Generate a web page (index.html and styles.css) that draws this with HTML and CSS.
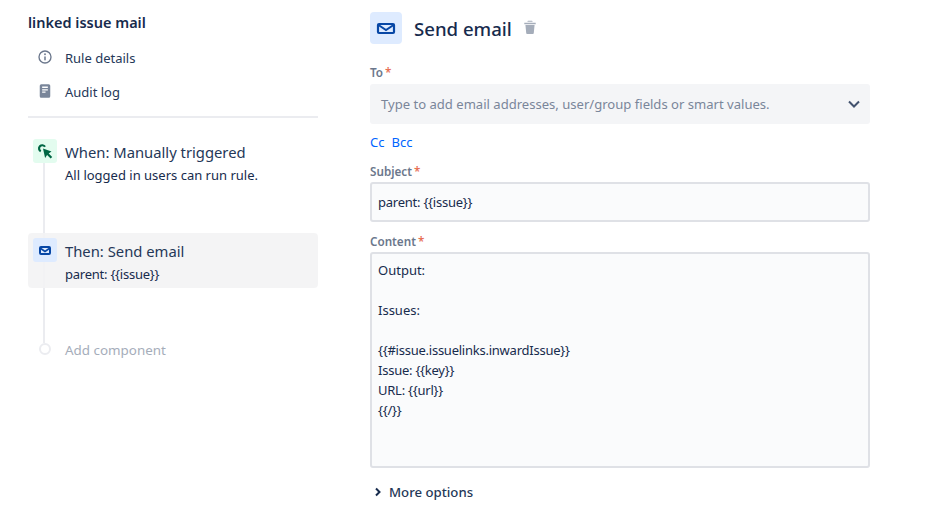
FILE: index.html
```html
<!DOCTYPE html>
<html lang="en">
<head>
<meta charset="utf-8">
<title>Send email</title>
<link rel="stylesheet" href="styles.css">
</head>
<body>
<div class="page">
  <aside class="side">
    <h2 class="rule-name">linked issue mail</h2>
    <nav class="side-nav">
      <a class="nav-item">
        <svg class="nav-icon" viewBox="0 0 24 24"><circle cx="12" cy="12" r="8" fill="none" stroke="#6b778c" stroke-width="1.800"/><rect x="11" y="11" width="2" height="5.500" rx="1" fill="#6b778c"/><circle cx="12" cy="8.300" r="1.200" fill="#6b778c"/></svg>
        <span>Rule details</span>
      </a>
      <a class="nav-item">
        <svg class="nav-icon" viewBox="0 0 24 24"><path fill-rule="evenodd" d="M7 3h10a2 2 0 0 1 2 2v14a2 2 0 0 1-2 2H7a2 2 0 0 1-2-2V5a2 2 0 0 1 2-2zm1.200 3v2h7.600V6zm0 3.600v1.600h7.600V9.600zm0 3.200v1.600h4.500v-1.600z" fill="#7a869a"/></svg>
        <span>Audit log</span>
      </a>
    </nav>
    <div class="steps">
      <div class="rail"></div>
      <div class="step step-when">
        <span class="badge badge-green">
          <svg viewBox="0 0 24 24" width="24" height="24"><path d="M10 9.500l8.500 3-2.800 2 3.500 3.500-1.600 1.600-3.500-3.500-2 2.900z" fill="#006644"/><path d="M7.800 12.300A3.200 3.200 0 1 1 12 7.800" fill="none" stroke="#006644" stroke-width="2.200"/></svg>
        </span>
        <div class="step-text">
          <div class="step-title">When: Manually triggered</div>
          <div class="step-sub">All logged in users can run rule.</div>
        </div>
      </div>
      <div class="step step-then">
        <span class="badge badge-blue">
          <svg viewBox="0 0 24 24" width="24" height="24"><rect x="7" y="9" width="10" height="7" rx="1" fill="none" stroke="#0747a6" stroke-width="2"/><path d="M7 10l5 3.500 5-3.500" fill="none" stroke="#0747a6" stroke-width="1.600"/></svg>
        </span>
        <div class="step-text">
          <div class="step-title">Then: Send email</div>
          <div class="step-sub tpl">parent: {{issue}}</div>
        </div>
      </div>
      <div class="step-add">
        <span class="dot-wrap"><span class="dot"></span></span>
        <span class="add-label">Add component</span>
      </div>
    </div>
  </aside>
  <main class="main">
    <header class="head">
      <span class="head-badge">
        <svg viewBox="0 0 32 32" width="32" height="32"><rect x="8" y="12" width="16" height="9" rx="1" fill="none" stroke="#0747a6" stroke-width="2.200"/><path d="M8.500 13l7.500 5 7.500-5" fill="none" stroke="#0747a6" stroke-width="2"/></svg>
      </span>
      <h1 class="head-title">Send email</h1>
      <svg class="trash" viewBox="0 0 14 14" width="16" height="16"><path d="M2 3.200h10v1.300H2zM5.200 1.500h3.600l.6 1H4.600zM3 5.200h8l-.7 7.300a.8.800 0 0 1-.8.700H4.500a.8.800 0 0 1-.8-.7z" fill="#a5adba"/></svg>
    </header>
    <div class="field field-to">
      <div class="label">To<span class="req">*</span></div>
      <div class="select">
        <span class="placeholder">Type to add email addresses, user/group fields or smart values.</span>
        <svg viewBox="0 0 14 10" width="14" height="10"><path d="M2 2.500l5 5 5-5" fill="none" stroke="#42526e" stroke-width="2"/></svg>
      </div>
    </div>
    <div class="links"><a class="link">Cc</a><a class="link">Bcc</a></div>
    <div class="field field-subject">
      <div class="label">Subject<span class="req">*</span></div>
      <div class="input tpl">parent: {{issue}}</div>
    </div>
    <div class="field">
      <div class="label">Content<span class="req">*</span></div>
      <div class="textarea">Output:

Issues:

<span class="tpl">{{#issue.issuelinks.inwardIssue}}
Issue: {{key}}
URL: {{url}}
{{/}}</span></div>
    </div>
    <div class="more">
      <svg viewBox="0 0 8 10" width="8" height="10"><path d="M2 1.500l3.500 3.500-3.500 3.500" fill="none" stroke="#172b4d" stroke-width="2"/></svg>
      <span>More options</span>
    </div>
  </main>
</div>
</body>
</html>
```
FILE: styles.css
```css
* { box-sizing: border-box; }
html, body { margin: 0; padding: 0; background: #fff; }
body {
  font-family: "Noto Sans", "Open Sans", sans-serif;
  font-size: 13px;
  color: #172b4d;
  overflow: hidden;
}
.tpl { letter-spacing: -0.24px; }
.page {
  display: flex;
  gap: 52px;
  padding: 12px 0 0 28px;
  height: 509px;
  overflow: hidden;
}
.side { width: 290px; flex: none; }
.rule-name {
  margin: 0;
  font-size: 14.500px;
  font-weight: 600;
  line-height: 20px;
}
.side-nav {
  margin-top: 9px;
  padding-bottom: 7px;
  border-bottom: 2px solid #ebecf0;
}
.nav-item {
  display: flex;
  align-items: center;
  height: 34px;
  padding-left: 8px;
  gap: 11px;
  color: #253858;
}
.nav-icon { width: 18px; height: 18px; flex: none; margin-top: -2px; }
.steps { position: relative; padding-top: 16px; }
.rail {
  position: absolute;
  left: 15px;
  top: 45px;
  width: 2px;
  height: 180px;
  background: #ebecf0;
}
.step { position: relative; display: flex; gap: 8px; padding: 5px; height: 55px; }
.step-when { margin-bottom: 44px; }
.step-then { background: rgb(243 243 244 / 0.9); border-radius: 4px; }
.badge {
  width: 24px;
  height: 24px;
  border-radius: 3px;
  flex: none;
  display: block;
}
.badge svg { display: block; }
.badge-green { background: #e3fcef; }
.badge-blue { background: #deebff; }
.step-title { font-size: 14.800px; line-height: 20px; color: #253858; margin-top: 3px; }
.step-sub { font-size: 13px; line-height: 16px; margin-top: 5px; color: #172b4d; }
.step-add {
  position: relative;
  display: flex;
  align-items: center;
  gap: 8px;
  padding: 0 5px;
  margin-top: 52px;
  height: 20px;
  font-size: 13.400px;
  color: #a5adba;
}
.dot-wrap { width: 24px; display: flex; justify-content: center; margin-top: -2px; }
.dot {
  display: block;
  width: 12px;
  height: 12px;
  border-radius: 50%;
  border: 2px solid #ebecf0;
  background: #fff;
}
.main { width: 500px; flex: none; }
.head { display: flex; align-items: center; height: 32px; }
.head-badge {
  width: 32px;
  height: 32px;
  border-radius: 4px;
  background: #deebff;
  display: block;
}
.head-badge svg { display: block; }
.head-title {
  margin: 2px 0 0 12px;
  font-size: 18.600px;
  font-weight: 500;
  line-height: 32px;
  color: #172b4d;
}
.trash { margin-left: 10px; margin-top: -3px; }
.label {
  font-size: 11.700px;
  font-weight: 600;
  line-height: 16px;
  color: #6b778c;
}
.req { color: #de350b; margin-left: 2px; opacity: .7; }
.field-to { margin-top: 20px; }
.select {
  display: flex;
  align-items: center;
  justify-content: space-between;
  height: 40px;
  margin-top: 4px;
  padding: 0 9px 0 11px;
  border-radius: 3px;
  background: #f4f5f7;
}
.placeholder { color: #7a869a; font-size: 13.070px; }
.links { display: flex; gap: 7px; margin-top: 9px; line-height: 18px; }
.link { color: #0065ff; }
.field-subject { margin-top: 12px; }
.input, .textarea {
  margin-top: 3px;
  background: #fafbfc;
  border: 2px solid #dfe1e6;
  border-radius: 3px;
  padding: 0 6px;
  color: #172b4d;
}
.input { height: 40px; line-height: 36px; margin-bottom: 11px; }
.textarea { height: 216px; padding-top: 6px; line-height: 20px; white-space: pre-wrap; }
.more {
  display: flex;
  align-items: center;
  gap: 7px;
  margin-top: 14px;
  padding-left: 4px;
  font-size: 13.200px;
  font-weight: 500;
  color: #253858;
  line-height: 20px;
}
```
